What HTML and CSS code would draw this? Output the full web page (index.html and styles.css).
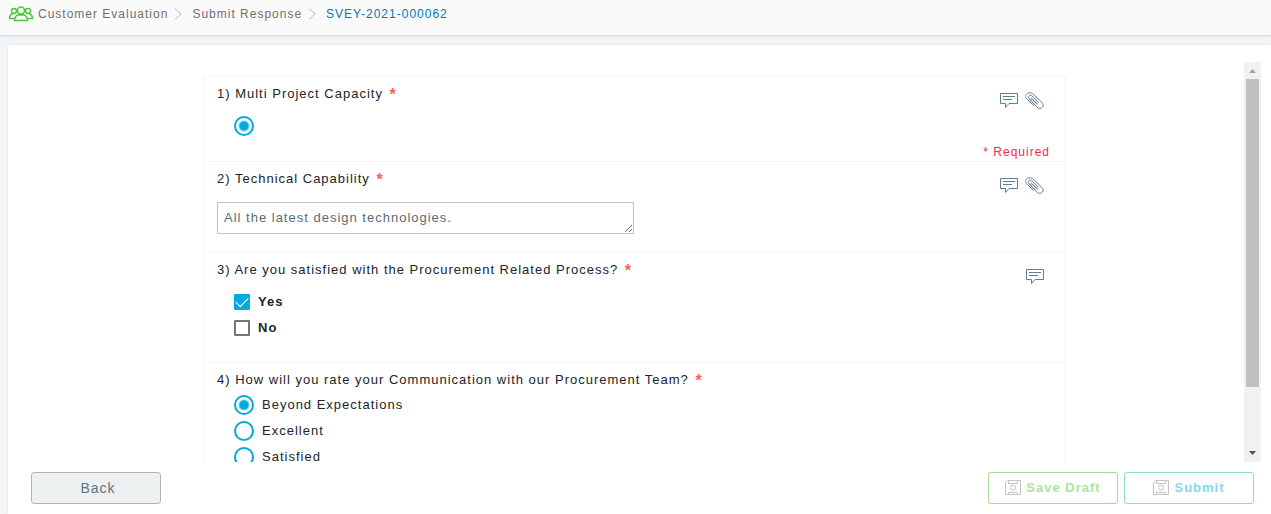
FILE: index.html
```html
<!DOCTYPE html>
<html lang="en">
<head>
<meta charset="utf-8">
<title>Submit Response</title>
<link rel="stylesheet" href="styles.css">
</head>
<body>
<svg class="sprite" aria-hidden="true">
  <symbol id="comment" viewBox="0 0 20 18"><path d="M1.500 1.500h17v10h-8.500l-3.500 4v-4h-5z M4 4.500h12 M4 7.500h9"/></symbol>
  <symbol id="clip" viewBox="0 0 20 18"><path d="M10.500 13 4 6.700C2 4.300 4.800 2 6.800 3.800l7 6.700M12.500 12 6.300 6M8.500 13.500 2.600 7.700C-.5 4-.5 4.500 1.200 2.500 3 .2 5.800.2 8.300 2.200l8.500 8.100c3.800 3.800-1.300 8.200-4.600 5L5.500 8.700c-1-1.200.5-2.500 1.600-1.500l5.400 5.100"/></symbol>
  <symbol id="disk" viewBox="0 0 16 16"><path d="M.5 2.500l2-2h13v14h-15z M3.500.5v3h9v-3 M3.500 14.500v-2h9v2"/><circle cx="8" cy="7.500" r="2.500"/></symbol>
</svg>
<header class="topbar">
  <svg class="people" viewBox="0 0 26 16" aria-hidden="true">
    <circle cx="6" cy="5" r="2.500"/><circle cx="20" cy="5" r="2.500"/>
    <path d="M7 12.500H1.500C1.500 10 2.500 8.500 5 7.500M19 12.500h5.500C24.500 10 23.500 8.500 21 7.500"/>
    <circle class="front" cx="13" cy="4.500" r="3.500"/>
    <path class="front" d="M6.500 14.500C6.500 11 8 9.500 11 8.500c1.300.6 2.700.6 4 0 3 1 4.500 2.500 4.500 6z"/>
  </svg>
  <nav class="crumbs" aria-label="Breadcrumb">
    <a href="#">Customer Evaluation</a>
    <svg class="chev" viewBox="0 0 8 12" aria-hidden="true"><path d="M1 .5 7 6l-6 5.500"/></svg>
    <a href="#">Submit Response</a>
    <svg class="chev" viewBox="0 0 8 12" aria-hidden="true"><path d="M1 .5 7 6l-6 5.500"/></svg>
    <a class="current" href="#" aria-current="page">SVEY-2021-000062</a>
  </nav>
</header>
<main class="panel">
  <div class="viewport">
    <div class="content">
      <form class="survey" id="survey">
        <section class="question">
          <div class="body">
            <h2 id="q1">1) Multi Project Capacity <span class="star">*</span></h2>
            <div class="options single"><input class="radio" type="radio" name="capacity" aria-labelledby="q1" checked></div>
          </div>
          <div class="side">
            <div class="tools">
              <button type="button" aria-label="Comment"><svg><use href="#comment"/></svg></button>
              <button type="button" aria-label="Attach"><svg><use href="#clip"/></svg></button>
            </div>
            <p class="required">* Required</p>
          </div>
        </section>
        <section class="question">
          <div class="body">
            <h2><label for="q2">2) Technical Capability <span class="star">*</span></label></h2>
            <textarea id="q2" rows="1">All the latest design technologies.</textarea>
          </div>
          <div class="side">
            <div class="tools">
              <button type="button" aria-label="Comment"><svg><use href="#comment"/></svg></button>
              <button type="button" aria-label="Attach"><svg><use href="#clip"/></svg></button>
            </div>
          </div>
        </section>
        <section class="question">
          <div class="body">
            <h2>3) Are you satisfied with the Procurement Related Process? <span class="star">*</span></h2>
            <div class="options checks">
              <label><input class="check" type="checkbox" checked>Yes</label>
              <label><input class="check" type="checkbox">No</label>
            </div>
          </div>
          <div class="side">
            <div class="tools">
              <button type="button" aria-label="Comment"><svg><use href="#comment"/></svg></button>
            </div>
          </div>
        </section>
        <section class="question">
          <div class="body">
            <h2>4) How will you rate your Communication with our Procurement Team? <span class="star">*</span></h2>
            <div class="options radios">
              <label><input class="radio" type="radio" name="rating" checked>Beyond Expectations</label>
              <label><input class="radio" type="radio" name="rating">Excellent</label>
              <label><input class="radio" type="radio" name="rating">Satisfied</label>
            </div>
          </div>
        </section>
      </form>
    </div>
    <div class="scrollbar" aria-hidden="true">
      <svg class="up" viewBox="0 0 17 17"><path d="M5 11h7L8.500 7z"/></svg>
      <div class="thumb"></div>
      <svg class="down" viewBox="0 0 17 17"><path d="M5 6h7l-3.500 4z"/></svg>
    </div>
  </div>
  <footer class="actions">
    <button class="btn back" type="button">Back</button>
    <button class="btn save" type="button"><svg><use href="#disk"/></svg>Save Draft</button>
    <button class="btn submit" type="submit" form="survey"><svg><use href="#disk"/></svg>Submit</button>
  </footer>
</main>
</body>
</html>
```
FILE: styles.css
```css
* { box-sizing: border-box; }
body {
  margin: 0;
  height: 100vh;
  display: flex;
  flex-direction: column;
  overflow: hidden;
  background: #f1f5f8;
  color: #212529;
  font: 13px/20px "Liberation Sans", Arial, sans-serif;
  letter-spacing: 1px;
}
svg { fill: none; stroke: currentColor; }
button, textarea { font: inherit; letter-spacing: inherit; }
input { appearance: none; margin: 0; flex: none; }
.sprite { display: none; }

.topbar {
  display: flex;
  align-items: center;
  gap: 4px;
  padding: 4px 8px 11px;
  background: #fafafa;
  border-bottom: 1px solid #d5dadd;
  box-shadow: 0 1px 2px #e3e7ea;
}
.people { width: 26px; height: 16px; color: #4cc63c; stroke-width: 1.4; }
.front { fill: #fafafa; }
.crumbs { display: flex; align-items: center; gap: 6px; font-size: 12px; }
.crumbs a { color: #707070; text-decoration: none; }
.crumbs .current { color: #0079b8; }
.chev { width: 8px; height: 12px; margin-right: 4px; color: #b9b9c6; }

.panel {
  flex: 1;
  min-height: 0;
  display: flex;
  flex-direction: column;
  margin: 9px 0 0 8px;
  padding-top: 17px;
  background: #fff;
  box-shadow: 0 0 2px #dde1e4;
}
.viewport { flex: 1; min-height: 0; display: flex; margin-right: 10px; }
.content { flex: 1; overflow: hidden; padding: 14px 0 0 16px; }
.survey {
  max-width: 862px;
  margin: 0 auto;
  border: 1px solid #f5f5f5;
  box-shadow: 0 0 1px #f2f2f2;
}
.question {
  display: flex;
  justify-content: space-between;
  padding: 7px 14px 0 13px;
}
.question + .question { border-top: 1px solid #f5f5f5; }
.body { flex: 1; padding-bottom: 18px; }
h2 { margin: 0; font-size: 13px; font-weight: 400; }
.star { margin-left: 2px; color: #ff5c5c; font-size: 16px; font-weight: 700; line-height: 16px; vertical-align: -2px; }
.options { padding-left: 17px; }
.options label { display: flex; align-items: center; width: max-content; }
.single { padding-top: 12px; height: 39px; }
.checks { padding-top: 9px; padding-bottom: 3px; }
.checks label { gap: 8px; height: 26px; font-weight: 700; }
.radios label { gap: 8px; height: 26px; }
.radios { padding-top: 2px; }

.radio {
  display: block;
  width: 20px;
  height: 20px;
  border: 2px solid #00a9e0;
  border-radius: 50%;
}
.radio:checked { background: radial-gradient(circle, #00a9e0 4px, #fff 6px); }
.check {
  display: grid;
  place-items: center;
  width: 16px;
  height: 16px;
  border: 2px solid #757575;
  border-radius: 1px;
}
.check:checked { background: #00a9e0; border-color: #00a9e0; }
.check:checked::before {
  content: "";
  width: 11px;
  height: 6px;
  margin-bottom: 3px;
  border: solid #fff;
  border-width: 0 0 1px 1px;
  transform: rotate(-45deg);
}
textarea {
  display: block;
  width: calc(50% + 26px);
  height: 32px;
  margin-top: 13px;
  padding: 5px 6px;
  border: 1px solid #c2c2c2;
  border-radius: 0;
  color: #5a6b75;
  resize: both;
  overflow: hidden;
}
.side { display: flex; flex-direction: column; align-items: flex-end; justify-content: space-between; }
.tools { display: flex; gap: 6px; padding: 8px 5px 0 0; }
.tools button { padding: 0; border: 0; background: none; color: #5f7f90; }
.tools svg { display: block; width: 20px; height: 18px; }
.required { margin: 0; color: #ff1f4b; font-size: 12px; line-height: 17px; }

.scrollbar { width: 17px; display: flex; flex-direction: column; background: #f1f1f1; }
.scrollbar svg { width: 17px; height: 17px; stroke: none; }
.up { fill: #a3a3a3; }
.down { fill: #505050; margin-top: auto; }
.thumb { height: 77%; margin: 0 2px; background: #c1c1c1; }

.actions { display: flex; gap: 6px; padding: 10px 17px 10px 23px; }
.btn {
  display: flex;
  align-items: center;
  justify-content: center;
  gap: 5px;
  width: 130px;
  height: 32px;
  padding: 0;
  background: #fff;
  border: 1px solid;
  border-radius: 3px;
  font-size: 13px;
  font-weight: 700;
}
.btn svg { width: 16px; height: 16px; color: #c4c4c4; }
.back { margin-right: auto; padding-left: 4px; background: #ecf0f1; border-color: #b1b5b7; color: #607580; font-size: 14px; font-weight: 400; }
.save { border-color: #a6dd94; color: #ace39c; }
.submit { border-color: #8de0bd; color: #7fd8f3; }
```
